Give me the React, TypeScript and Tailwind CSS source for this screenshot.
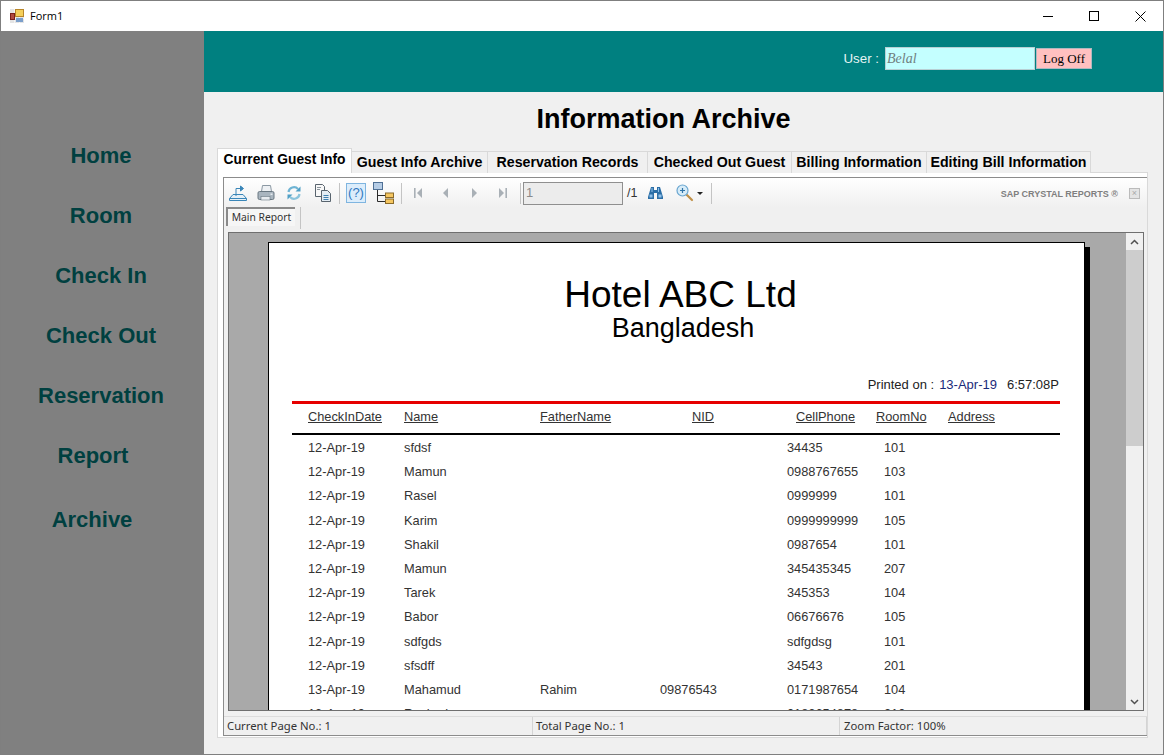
import React from 'react';

const navItems = [
  { label: 'Home', cls: 'w-[200px] h-[60px]' },
  { label: 'Room', cls: 'w-[200px] h-[60px]' },
  { label: 'Check In', cls: 'w-[200px] h-[60px]' },
  { label: 'Check Out', cls: 'w-[200px] h-[60px]' },
  { label: 'Reservation', cls: 'w-[200px] h-[60px]' },
  { label: 'Report', cls: 'w-[184px] h-[60px]' },
  { label: 'Archive', cls: 'w-[182px] h-[68px]' },
];

const tabs = [
  { label: 'Guest Info Archive', w: 'w-[137px]' },
  { label: 'Reservation Records', w: 'w-[161px]' },
  { label: 'Checked Out Guest', w: 'w-[145px]' },
  { label: 'Billing Information', w: 'w-[136px]' },
  { label: 'Editing Bill Information', w: 'w-[165px]' },
];

const rows = [
  ['12-Apr-19', 'sfdsf', '', '', '34435', '101'],
  ['12-Apr-19', 'Mamun', '', '', '0988767655', '103'],
  ['12-Apr-19', 'Rasel', '', '', '0999999', '101'],
  ['12-Apr-19', 'Karim', '', '', '0999999999', '105'],
  ['12-Apr-19', 'Shakil', '', '', '0987654', '101'],
  ['12-Apr-19', 'Mamun', '', '', '345435345', '207'],
  ['12-Apr-19', 'Tarek', '', '', '345353', '104'],
  ['12-Apr-19', 'Babor', '', '', '06676676', '105'],
  ['12-Apr-19', 'sdfgds', '', '', 'sdfgdsg', '101'],
  ['12-Apr-19', 'sfsdff', '', '', '34543', '201'],
  ['13-Apr-19', 'Mahamud', 'Rahim', '09876543', '0171987654', '104'],
  ['13-Apr-19', 'Rashed', '', '', '0182654878', '210'],
];

const FormIcon = () => (
  <svg width="14" height="14" viewBox="0 0 14 14">
    <rect x="0" y="0" width="14" height="14" fill="#e4e4e4" />
    <path d="M0 4.5h14M0 9.5h14M4.5 0v14M9.5 0v14" stroke="#fff" strokeWidth="0.6" />
    <rect x="0.5" y="4.5" width="4" height="6" fill="#b04a40" stroke="#7a1f1a" />
    <rect x="5.5" y="0.5" width="8" height="7" fill="#f4cf5a" stroke="#b8862a" />
    <rect x="6" y="9" width="7" height="4" fill="#7b9fcb" />
  </svg>
);

const ExportIcon = () => (
  <svg width="18" height="18" viewBox="0 0 18 18" fill="none" stroke="#3a86b8" strokeWidth="1">
    <path d="M0.5 14.5l3.5-4h10l3.5 4v2H0.5z" fill="#e6f0f7" />
    <path d="M0.5 14.5h17" />
    <path d="M7 12V4.5h5" />
    <path d="M11.5 2l3 2.5-3 2.5z" fill="#3a86b8" />
  </svg>
);

const PrintIcon = () => (
  <svg width="18" height="18" viewBox="0 0 18 18">
    <path d="M5.5 1.5h8l1 6h-10z" fill="#eef1f4" stroke="#8b98a3" />
    <rect x="1" y="7.5" width="16" height="8" rx="1.5" fill="#a9b5bf" stroke="#6a7882" />
    <rect x="4" y="12.5" width="9" height="3.5" fill="#e8ecf0" stroke="#6a7882" strokeWidth="0.6" />
    <rect x="13.5" y="9.5" width="2" height="1.5" fill="#e6ebf0" />
  </svg>
);

const RefreshIcon = () => (
  <svg width="16" height="16" viewBox="0 0 16 16" fill="none" strokeWidth="2.2">
    <path d="M2.5 7A5.5 5.5 0 0 1 12 4" stroke="#6fb4d4" />
    <path d="M13.5 9A5.5 5.5 0 0 1 4 12" stroke="#8cc4dc" />
    <path d="M14.5 1.5v5h-5z" fill="#4f9fc6" />
    <path d="M1.5 14.5v-5h5z" fill="#4f9fc6" />
  </svg>
);

const CopyIcon = () => (
  <svg width="18" height="18" viewBox="0 0 18 18" stroke="#59646e" strokeWidth="1">
    <path d="M1.5 0.5h7l2 2v10h-9z" fill="#f8f8f8" />
    <path d="M7.5 6.5h6l3 3v8h-9z" fill="#e4edf4" />
    <path d="M9.5 11.5h5M9.5 13.5h5M9.5 15.5h5" stroke="#3f80b0" />
    <path d="M3 3.5h4M3 5.5h3" stroke="#8a949c" />
  </svg>
);

const TreeIcon = () => (
  <svg width="21" height="22" viewBox="0 0 21 22">
    <path d="M4.5 8v11.5h8M4.5 13.5h8" fill="none" stroke="#2b2b2b" />
    <rect x="0.5" y="0.5" width="9" height="7" fill="#b6cde6" stroke="#4f7095" />
    <rect x="12.5" y="11" width="8" height="4.5" fill="#f5c660" stroke="#8a6a2a" />
    <rect x="12.5" y="17" width="8" height="4.5" fill="#f5c660" stroke="#8a6a2a" />
  </svg>
);

const NavArrow = ({ dir, bar }: { dir: 'l' | 'r'; bar?: boolean }) => (
  <svg width="10" height="12" viewBox="0 0 10 12" fill="#a9b0b6">
    {dir === 'l' ? <path d="M8 1v10L3 6z" /> : <path d="M2 1v10l5-5z" />}
    {bar && dir === 'l' && <rect x="0" y="1" width="1.6" height="10" />}
    {bar && dir === 'r' && <rect x="8.4" y="1" width="1.6" height="10" />}
  </svg>
);

const BinocularsIcon = () => (
  <svg width="15" height="14" viewBox="0 0 15 14" fill="#2b6ea6">
    <path d="M3 1h3v3h3V1h3l3 10v2H9V7H6v6H0v-2z" />
    <rect x="1.5" y="8.5" width="3" height="3" fill="#8fc0ea" />
    <rect x="10.5" y="8.5" width="3" height="3" fill="#8fc0ea" />
    <rect x="3.5" y="2" width="1" height="4" fill="#8fc0ea" />
    <rect x="10" y="2" width="1" height="4" fill="#8fc0ea" />
  </svg>
);

const ZoomIcon = () => (
  <svg width="18" height="18" viewBox="0 0 18 18">
    <path d="M10.5 10.5l5.5 5.5" stroke="#c09048" strokeWidth="2.2" strokeLinecap="round" />
    <circle cx="6.5" cy="6.5" r="5.5" fill="#d7ecf8" stroke="#6aa6d0" strokeWidth="1.2" />
    <path d="M4 6.5h5M6.5 4v5" stroke="#2f74a8" strokeWidth="1.2" />
  </svg>
);

const Sep = ({ h = 'h-[21px]' }: { h?: string }) => <div className={`w-px ${h} bg-[#c4c4c4]`} />;

export default function App() {
  return (
    <div className="w-[1164px] h-[755px] overflow-hidden flex flex-col border border-[#7f7f7f] bg-[#f0f0f0] font-['Liberation_Sans',Arial,sans-serif]">
      {/* title bar */}
      <div className="h-[30px] shrink-0 bg-white flex items-center">
        <div className="ml-[9px] mr-[6px]"><FormIcon /></div>
        <span className="text-[11px] text-black font-['Open_Sans',sans-serif] mt-px">Form1</span>
        <div className="ml-auto flex items-center h-full">
          <div className="w-[46px] h-full flex items-center justify-center">
            <div className="w-[10px] h-px bg-black" />
          </div>
          <div className="w-[46px] h-full flex items-center justify-center">
            <div className="w-[10px] h-[10px] border border-black" />
          </div>
          <div className="w-[46px] h-full flex items-center justify-center">
            <svg width="11" height="11" viewBox="0 0 11 11" stroke="#000" strokeWidth="1"><path d="M0.5 0.5l10 10M10.5 0.5l-10 10" /></svg>
          </div>
        </div>
      </div>

      <div className="flex-1 flex min-h-0">
        {/* side menu */}
        <div className="w-[203px] shrink-0 bg-[#808080] pt-[94px] flex flex-col">
          {navItems.map((n) => (
            <div key={n.label} className={`${n.cls} flex items-center justify-center text-[22px] font-bold text-[#004040]`}>
              {n.label}
            </div>
          ))}
        </div>

        <div className="flex-1 min-w-0 flex flex-col">
          {/* header */}
          <div className="h-[61px] shrink-0 bg-[#008080] flex items-start justify-end pr-[71px] pt-[16px]">
            <span className="text-[13.33px] text-[#e6f4f4] mr-[6px] mt-[2px]">User :</span>
            <div className="w-[150px] h-[23px] bg-[#c4ffff] border border-[#b8d0d4] pl-[1px] flex items-center text-[14px] italic text-[#708080] font-['Liberation_Serif',serif]">Belal</div>
            <div className="w-[56px] h-[21px] ml-px mt-px bg-[#ffc0c0] border border-[#b0b8c0] flex items-center justify-center text-[13px] text-black font-['Liberation_Serif',serif]">Log Off</div>
          </div>

          <div className="h-[56px] shrink-0 flex items-center justify-center text-[27px] font-bold text-black pr-[40px] pb-[2px]">
            Information Archive
          </div>

          {/* tabs */}
          <div className="flex items-end h-[25px] shrink-0 pl-[13px] relative z-10">
            <div className="w-[135px] h-[25px] bg-white border border-b-0 border-[#d9d9d9] flex items-center justify-center text-[13.8px] font-bold text-black pb-[2px] whitespace-nowrap">
              Current Guest Info
            </div>
            {tabs.map((t) => (
              <div key={t.label} className={`${t.w} h-[22px] -ml-px bg-[#f0f0f0] border border-b-0 border-[#d9d9d9] flex items-center justify-center text-[14.2px] font-bold text-black pt-[1px] whitespace-nowrap`}>
                {t.label}
              </div>
            ))}
          </div>

          {/* tab page */}
          <div className="ml-[13px] mr-[15px] h-[566px] bg-white border border-[#d9d9d9] pl-[5px] pt-[4px] -mt-px">
            <div className="h-[559px] flex flex-col border-t border-l border-b border-[#8c8c8c] bg-[#f0f0f0]">
              {/* toolbar */}
              <div className="h-[29px] shrink-0 flex items-center bg-gradient-to-b from-white to-[#f0f0f0] pl-[4px] pt-[1px] text-[#333]">
                <div className="w-[19px] flex justify-center"><ExportIcon /></div>
                <div className="w-[28px] ml-[5px] flex justify-center"><PrintIcon /></div>
                <div className="w-[27px] flex justify-center"><RefreshIcon /></div>
                <div className="w-[31px] flex justify-center"><CopyIcon /></div>
                <div className="ml-[1px]"><Sep /></div>
                <div className="w-[20px] h-[20px] ml-[6px] bg-[#dcedfb] border border-[#7fb5e0] flex items-center justify-center text-[13px] text-[#2f78c0]">(?)</div>
                <div className="w-[21px] ml-[7px] -mt-px"><TreeIcon /></div>
                <div className="ml-[7px] mr-[8px]"><Sep /></div>
                <div className="w-[18px] flex justify-center"><NavArrow dir="l" bar /></div>
                <div className="w-[24px] ml-[5px] flex justify-center"><NavArrow dir="l" /></div>
                <div className="w-[24px] ml-[6px] flex justify-center"><NavArrow dir="r" /></div>
                <div className="w-[20px] ml-[5px] flex justify-center"><NavArrow dir="r" bar /></div>
                <div className="ml-[8px] mr-[2px]"><Sep /></div>
                <div className="w-[100px] h-[23px] bg-[#ececec] border border-[#8f8f8f] pl-[2px] text-[13px] leading-[19px] text-[#8a8a8a]">1</div>
                <span className="ml-[4px] text-[12.5px] text-[#333]">/1</span>
                <div className="ml-[11px]"><BinocularsIcon /></div>
                <div className="ml-[13px]"><ZoomIcon /></div>
                <div className="ml-[3px] w-0 h-0 border-x-[3px] border-x-transparent border-t-[3px] border-t-[#222]" />
                <div className="ml-[8px]"><Sep /></div>
                <span className="ml-auto mt-[3px] text-[9px] font-bold text-[#7f7f7f]">SAP CRYSTAL REPORTS ®</span>
                <div className="ml-[11px] mr-[7px] mt-[1px] w-[11px] h-[11px] border border-[#bbb] bg-[#e4e4e4] text-[#aaa] text-[9px] leading-[9px] flex items-center justify-center">×</div>
              </div>

              {/* document tabs */}
              <div className="h-[25px] shrink-0 flex items-start pl-[2px]">
                <div className="w-[69px] h-[19px] bg-[#f6f6f6] border-t-2 border-l-2 border-[#8a8a8a] flex items-center justify-center text-[10.3px] text-[#333] font-['Noto_Sans',sans-serif]">Main Report</div>
                <div className="w-px h-[22px] ml-[5px] bg-[#c4c4c4]" />
              </div>

              {/* report area */}
              <div className="h-[479px] shrink-0 ml-[4px] mr-[3px] border border-[#6f6f6f] bg-[#a9a9a9] flex overflow-hidden">
                <div className="flex-1 min-w-0 pl-[39px] pt-[9px] overflow-hidden">
                  <div className="w-[817px] h-[600px] bg-white border border-black shadow-[5px_5px_0_#000]">
                    <div className="pt-[32px] text-center text-black">
                      <div className="text-[37px] leading-[39px] pl-[8px]">Hotel ABC Ltd</div>
                      <div className="text-[27px] leading-[28px] pl-[13px]">Bangladesh</div>
                    </div>
                    <div className="mt-[32px] flex justify-end pr-[25px] text-[13px] leading-[21px] text-[#222]">
                      <span>Printed on :</span>
                      <span className="ml-[5px] text-[#1a2a7a]">13-Apr-19</span>
                      <span className="ml-[10px]">6:57:08P</span>
                    </div>
                    <div className="ml-[23px] mr-[24px] mt-[6px] h-[3px] bg-[#e60000]" />
                    <div className="ml-[23px] mr-[24px] pl-[16px] pb-[4px] h-[31px] border-b-2 border-black grid grid-cols-[96px_136px_152px_104px_80px_72px_1fr] items-center text-[12.8px] underline text-[#333]">
                      <span>CheckInDate</span>
                      <span>Name</span>
                      <span>FatherName</span>
                      <span>NID</span>
                      <span>CellPhone</span>
                      <span>RoomNo</span>
                      <span>Address</span>
                    </div>
                    <div className="mx-[23px] pl-[16px] pt-[0.5px]">
                      {rows.map((r, i) => (
                        <div key={i} className="h-[24.2px] grid grid-cols-[96px_136px_120px_127px_97px_1fr] items-center text-[12.8px] text-[#333]">
                          {r.map((c, j) => <span key={j}>{c}</span>)}
                        </div>
                      ))}
                    </div>
                  </div>
                </div>
                {/* scrollbar */}
                <div className="w-[17px] shrink-0 bg-[#f0f0f0] flex flex-col">
                  <div className="h-[17px] flex items-center justify-center">
                    <svg width="9" height="6" viewBox="0 0 9 6" fill="none" stroke="#505050" strokeWidth="1.5"><path d="M1 5l3.5-3.5L8 5" /></svg>
                  </div>
                  <div className="h-[196px] bg-[#cdcdcd]" />
                  <div className="flex-1" />
                  <div className="h-[17px] flex items-center justify-center">
                    <svg width="9" height="6" viewBox="0 0 9 6" fill="none" stroke="#505050" strokeWidth="1.5"><path d="M1 1l3.5 3.5L8 1" /></svg>
                  </div>
                </div>
              </div>

              {/* status bar */}
              <div className="mt-[5px] flex-1 flex text-[11.3px] text-[#333] border-t border-[#dcdcdc] font-['Noto_Sans',sans-serif]">
                <div className="w-[309px] border-r border-[#d4d4d4] pl-[3px] flex items-center">Current Page No.: 1</div>
                <div className="w-[307px] border-r border-[#d4d4d4] pl-[3px] flex items-center">Total Page No.: 1</div>
                <div className="flex-1 border-r border-[#d4d4d4] pl-[4px] flex items-center">Zoom Factor: 100%</div>
              </div>
            </div>
          </div>
        </div>
      </div>
    </div>
  );
}
